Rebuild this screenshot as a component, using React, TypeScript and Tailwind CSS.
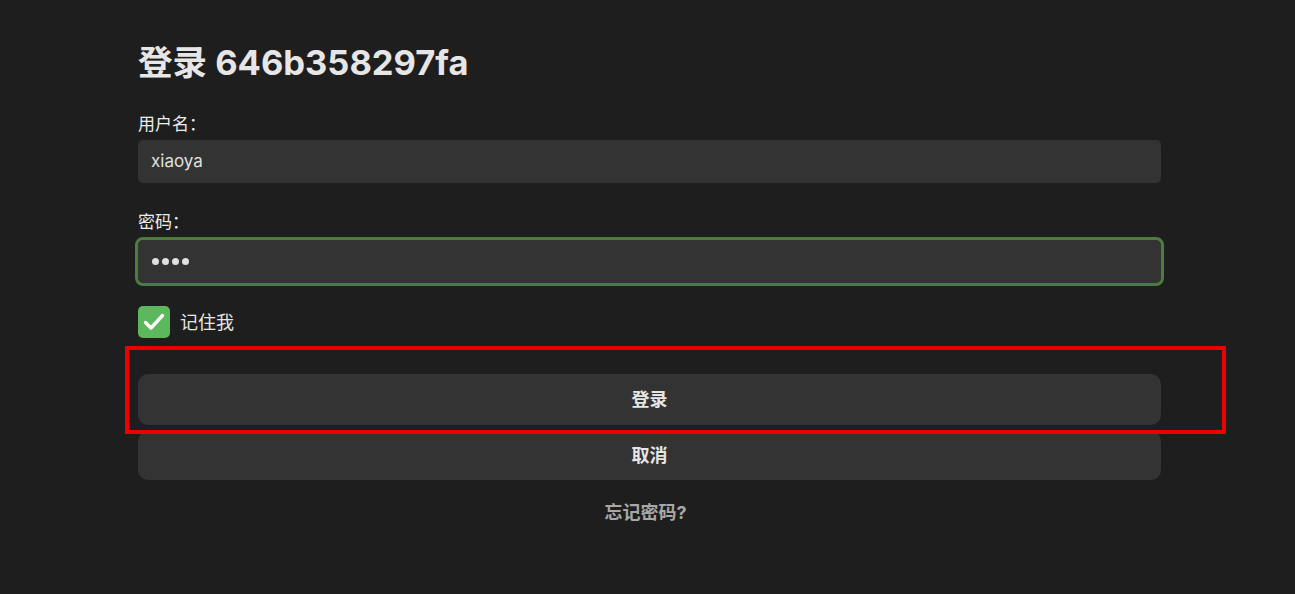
import React from "react";

export default function App() {
  return (
    <div
      className="relative w-[1295px] h-[594px] bg-[#1e1e1e] text-[#e3e3e3] overflow-hidden"
      style={{ fontFamily: 'Inter, "Noto Sans CJK SC", sans-serif' }}
    >
      <div className="w-[1023px] ml-[138px] pt-[38px] flex flex-col">
        <h1 className="text-[34.5px] leading-[50px] font-bold text-[#e6e6e6]">登录 646b358297fa</h1>
        <label className="mt-[24px] text-[17px] leading-[24px] text-[#ececec]">用户名：</label>
        <div className="mt-[4px] h-[43px] rounded-[5px] bg-[#333333] flex items-center px-[13px] text-[17px] text-[#e0e0e0]">
          xiaoya
        </div>
        <label className="mt-[27px] text-[17px] leading-[24px] text-[#ececec]">密码：</label>
        <div className="mt-[6px] h-[43px] rounded-[5px] bg-[#333333] flex items-center px-[14px] outline outline-[3px] outline-[#4c7d3f] text-[#e0e0e0]">
          <div className="flex gap-[3px]">
            <span className="w-[7px] h-[7px] rounded-full bg-[#e0e0e0]" />
            <span className="w-[7px] h-[7px] rounded-full bg-[#e0e0e0]" />
            <span className="w-[7px] h-[7px] rounded-full bg-[#e0e0e0]" />
            <span className="w-[7px] h-[7px] rounded-full bg-[#e0e0e0]" />
          </div>
        </div>
        <div className="mt-[23px] flex items-center gap-[10px]">
          <div className="w-[32px] h-[32px] rounded-[5px] bg-[#5cb85c] flex items-center justify-center">
            <svg width="24" height="24" viewBox="0 0 24 24" fill="none" stroke="#ffffff" strokeWidth="3.4" strokeLinecap="round" strokeLinejoin="round">
              <path d="M3.5 12.5l5.5 5.5L20.5 5.5" />
            </svg>
          </div>
          <span className="text-[18px] text-[#e6e6e6]">记住我</span>
        </div>
        <button className="mt-[36px] h-[51px] rounded-[10px] bg-[#333333] text-[18px] font-bold text-[#e6e6e6]">登录</button>
        <button className="mt-[6px] h-[49px] rounded-[10px] bg-[#333333] text-[18px] font-bold text-[#e6e6e6]">取消</button>
        <div className="mt-[19px] text-center text-[18px] font-bold text-[#a8a8a8] pr-[8px]">忘记密码?</div>
      </div>
      <div className="absolute left-[125px] top-[346px] w-[1101px] h-[88px] border-[4px] border-[#ee0000]" />
    </div>
  );
}
